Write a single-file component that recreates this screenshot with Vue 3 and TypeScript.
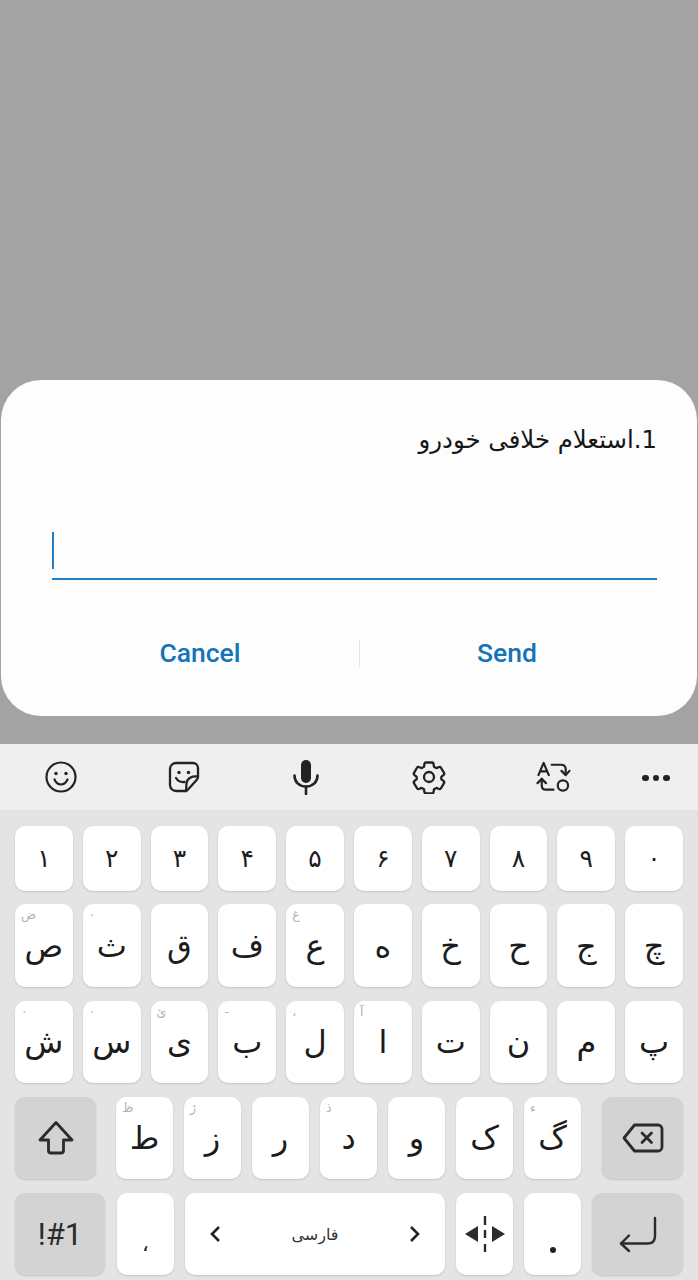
<script setup lang="ts">
interface K { c: string; h?: string }
const mk = (s: string[], h: Record<number, string> = {}): K[] => s.map((c, i) => ({ c, h: h[i] }))
const row1 = mk(['۱','۲','۳','۴','۵','۶','۷','۸','۹','۰'])
const row2 = mk(['ص','ث','ق','ف','ع','ه','خ','ح','ج','چ'], { 0: 'ض', 1: '٠', 4: 'غ' })
const row3 = mk(['ش','س','ی','ب','ل','ا','ت','ن','م','پ'], { 0: '٠', 1: '٠', 2: 'ئ', 3: '-', 4: '،', 5: 'آ' })
const row4 = mk(['ط','ز','ر','د','و','ک','گ'], { 0: 'ظ', 1: 'ژ', 3: 'ذ', 6: 'ء' })
</script>

<template>
  <div class="screen">
    <div class="scrim">
      <div class="dialog">
        <div class="title" dir="rtl">1.استعلام خلافی خودرو</div>
        <div class="field"><span class="caret"></span></div>
        <div class="actions">
          <span class="act">Cancel</span>
          <span class="sep"></span>
          <span class="act">Send</span>
        </div>
      </div>
    </div>

    <div class="toolbar">
      <div class="tool">
        <svg width="34" height="34" viewBox="0 0 34 34" fill="none" stroke="#222" stroke-width="2.2" stroke-linecap="round">
          <circle cx="17" cy="17" r="14.5" />
          <circle cx="12" cy="13.5" r="1.7" fill="#222" stroke="none" />
          <circle cx="22" cy="13.5" r="1.7" fill="#222" stroke="none" />
          <path d="M10.5 19.5c1.5 3.4 3.8 5 6.5 5s5-1.6 6.5-5" />
        </svg>
      </div>
      <div class="tool">
        <svg width="34" height="34" viewBox="0 0 34 34" fill="none" stroke="#222" stroke-width="2.3" stroke-linecap="round" stroke-linejoin="round">
          <path d="M19 31H9a6 6 0 0 1-6-6V9a6 6 0 0 1 6-6h17a5 5 0 0 1 5 5v9c0 1-.5 2-1.2 2.800L21.500 29c-.7.9-1.500 2-2.500 2Z" />
          <path d="M30.500 16.500c-5.500-.5-10.500 1.500-11 7l-.5 7.500" />
          <circle cx="12" cy="12.500" r="1.700" fill="#222" stroke="none" />
          <circle cx="21.500" cy="12.500" r="1.700" fill="#222" stroke="none" />
          <path d="M9 18c1.800 3 4.500 4.500 8.500 4" />
        </svg>
      </div>
      <div class="tool">
        <svg width="26" height="35" viewBox="0 0 26 35" fill="none" stroke="#222" stroke-width="2.600" stroke-linecap="round">
          <rect x="8" y="0" width="10" height="23" rx="5" fill="#222" stroke="none" />
          <path d="M1.500 15.500c0 6.500 4.500 11 11.500 11s11.500-4.500 11.500-11" />
          <path d="M13 27v7" />
        </svg>
      </div>
      <div class="tool">
        <svg width="34" height="34" viewBox="0 0 34 34" fill="none" stroke="#222" stroke-width="2.300" stroke-linejoin="round">
          <path d="M14 2.500h6a1.500 1.500 0 0 1 1.500 1.300l.5 3 2.300 1.300 2.900-1.100a1.500 1.500 0 0 1 1.800.7l3 5.200a1.500 1.500 0 0 1-.3 1.900l-2.400 2v2.400l2.400 2a1.500 1.500 0 0 1 .3 1.900l-3 5.200a1.500 1.500 0 0 1-1.800.7l-2.900-1.100-2.300 1.300-.5 3a1.500 1.500 0 0 1-1.500 1.300h-6a1.500 1.500 0 0 1-1.500-1.300l-.5-3-2.300-1.300-2.900 1.100a1.500 1.500 0 0 1-1.800-.7l-3-5.200a1.500 1.500 0 0 1 .3-1.900l2.400-2v-2.400l-2.400-2a1.500 1.500 0 0 1-.3-1.900l3-5.200a1.500 1.500 0 0 1 1.800-.7l2.900 1.100 2.300-1.300.5-3A1.500 1.500 0 0 1 14 2.500Z" />
          <circle cx="17" cy="17" r="5" />
        </svg>
      </div>
      <div class="tool">
        <svg width="35" height="32" viewBox="0 0 36 34" fill="none" stroke="#222" stroke-width="2.300" stroke-linecap="round" stroke-linejoin="round">
          <path d="M2 15 7.500 2 13 15M4 11h7" />
          <path d="M16 4h10c3 0 5 2 5 5v5" />
          <path d="M26.500 10.500 31 15l4-4.500" />
          <path d="M5.500 19v7c0 2.500 1.500 4.500 4.500 4.500h8" />
          <path d="M1 23.500 5.500 19l4.500 4.500" />
          <circle cx="28" cy="26" r="5.500" />
        </svg>
      </div>
      <div class="tool dots"><i></i><i></i><i></i></div>
    </div>

    <div class="keyboard">
      <div class="row r-num">
        <div v-for="k in row1" :key="k.c" class="key digit">{{ k.c }}</div>
      </div>
      <div class="row r2">
        <div v-for="k in row2" :key="k.c" class="key"><span v-if="k.h" class="hint">{{ k.h }}</span>{{ k.c }}</div>
      </div>
      <div class="row">
        <div v-for="k in row3" :key="k.c" class="key"><span v-if="k.h" class="hint">{{ k.h }}</span>{{ k.c }}</div>
      </div>
      <div class="row r4">
        <div class="key fn shift">
          <svg width="38" height="36" viewBox="0 0 38 36" fill="none" stroke="#2b2b2b" stroke-width="2.800" stroke-linejoin="round">
            <path d="M19 2.500 35 20h-8.500v10.500a2.500 2.500 0 0 1-2.500 2.500h-10a2.500 2.500 0 0 1-2.500-2.500V20H3Z" transform="translate(0 0)" />
          </svg>
        </div>
        <div class="letters">
          <div v-for="k in row4" :key="k.c" class="key"><span v-if="k.h" class="hint">{{ k.h }}</span>{{ k.c }}</div>
        </div>
        <div class="key fn shift">
          <svg width="42" height="30" viewBox="0 0 42 30" fill="none" stroke="#2b2b2b" stroke-width="2.800" stroke-linecap="round" stroke-linejoin="round">
            <path d="M12.500 2H36a4 4 0 0 1 4 4v18a4 4 0 0 1-4 4H12.500L2 15Z" />
            <path d="M20 10l9.500 9.500M29.500 10 20 19.500" />
          </svg>
        </div>
      </div>
      <div class="row r5">
        <div class="key fn sym">!#1</div>
        <div class="key comma">،</div>
        <div class="key space">
          <svg width="12" height="18" viewBox="0 0 12 18" fill="none" stroke="#222" stroke-width="2.600"><path d="M10 2 3 9l7 7" /></svg>
          <span class="lang">فارسی</span>
          <svg width="12" height="18" viewBox="0 0 12 18" fill="none" stroke="#222" stroke-width="2.600"><path d="M2 2l7 7-7 7" /></svg>
        </div>
        <div class="key">
          <svg width="42" height="38" viewBox="0 0 42 38" fill="#2b2b2b">
            <path d="M14 11v16L1 19ZM28 11v16l13-8Z" />
            <path d="M19.800 1h2.400v9h-2.400ZM19.800 15h2.400v8h-2.400ZM19.800 29h2.400v8h-2.400Z" />
          </svg>
        </div>
        <div class="key period"><i></i></div>
        <div class="key fn enter">
          <svg width="40" height="36" viewBox="0 0 40 36" fill="none" stroke="#2b2b2b" stroke-width="2.400" stroke-linecap="round" stroke-linejoin="round">
            <path d="M37 2v18c0 5-2.500 7.500-7.500 7.500H3" />
            <path d="M11 19.500 3 27.500 11 35" />
          </svg>
        </div>
      </div>
    </div>
  </div>
</template>

<style>
html, body { margin: 0; padding: 0; background: #e4e4e4; }
</style>

<style scoped>
.screen {
  width: 698px;
  height: 1280px;
  overflow: hidden;
  display: flex;
  flex-direction: column;
  font-family: "DejaVu Sans", sans-serif;
  color: #1c1c1c;
}
.scrim {
  height: 744px;
  flex: none;
  box-sizing: border-box;
  padding: 380px 1px 0;
  background: #a3a3a3;
}
.dialog {
  height: 336px;
  box-sizing: border-box;
  background: #fdfdfd;
  border-radius: 40px;
  padding: 41px 40px 0 51px;
  display: flex;
  flex-direction: column;
}
.title {
  font-size: 24.4px;
  line-height: 38px;
  color: #161616;
  height: 38px;
}
.field {
  margin-top: 71px;
  height: 50px;
  box-sizing: border-box;
  border-bottom: 2px solid #2280c2;
  padding-top: 2px;
}
.caret {
  display: block;
  width: 2px;
  height: 37px;
  background: #2280c2;
}
.actions {
  margin: 59px -40px 0 -51px;
  height: 28px;
  display: grid;
  grid-template-columns: 318px 1px 294px;
  align-items: center;
  padding-left: 40px;
}
.act {
  font-family: Roboto, sans-serif;
  font-weight: 500;
  font-size: 26.5px;
  line-height: 28px;
  color: #1574b8;
  text-align: center;
}
.sep {
  width: 1px;
  height: 27px;
  background: #e3e3e3;
}
.toolbar {
  height: 66px;
  flex: none;
  background: #efefef;
  display: grid;
  grid-template-columns: 122px 124px 119px 127px 122px 84px;
  align-items: center;
  justify-items: center;
}
.tool { display: flex; align-items: center; justify-content: center; }
.dots { gap: 4px; padding-top: 2px; }
.dots i {
  width: 6.5px;
  height: 6.5px;
  border-radius: 50%;
  background: #222;
}
.keyboard {
  flex: 1;
  background: #e4e4e4;
  padding: 16px 15px 0;
  display: flex;
  flex-direction: column;
  gap: 14px;
}
.row {
  display: grid;
  grid-template-columns: repeat(10, 1fr);
  column-gap: 10px;
  height: 82px;
}
.r-num { height: 65px; margin-bottom: -1px; }
.r2 { height: 83px; }
.key {
  position: relative;
  background: #fff;
  border-radius: 10px;
  box-shadow: 0 1px 2px rgba(0, 0, 0, 0.14);
  display: flex;
  align-items: center;
  justify-content: center;
  font-size: 32px;
  color: #1c1c1c;
}
.digit { font-size: 25px; }
.hint {
  position: absolute;
  left: 6px;
  top: 4px;
  font-size: 12.5px;
  line-height: 14px;
  color: #b2b2b2;
}
.r4, .r5 { display: flex; column-gap: 11px; }
.r4 .fn { width: 81px; flex: none; }
.r4 .shift:first-child { margin-right: 9px; }
.r4 .shift:last-child { margin-left: 10px; }
.letters {
  flex: 1;
  display: grid;
  grid-template-columns: repeat(7, 1fr);
  column-gap: 11px;
}
.fn { background: #d3d3d3; }
.r5 .key { width: 57px; flex: none; }
.r5 .sym {
  width: 90px;
  margin-right: 1px;
  font-family: Roboto, sans-serif;
  font-size: 31px;
  font-weight: 400;
  color: #2b2b2b;
}
.r5 .space {
  width: 260px;
  justify-content: space-between;
  padding: 0 24px;
  box-sizing: border-box;
}
.r5 .enter { width: 91px; }
.lang { font-size: 16px; color: #333; }
.comma { padding-top: 20px; font-size: 21px; box-sizing: border-box; }
.period i {
  width: 6px;
  height: 6px;
  border-radius: 50%;
  background: #222;
  margin-top: 31px;
}
</style>
